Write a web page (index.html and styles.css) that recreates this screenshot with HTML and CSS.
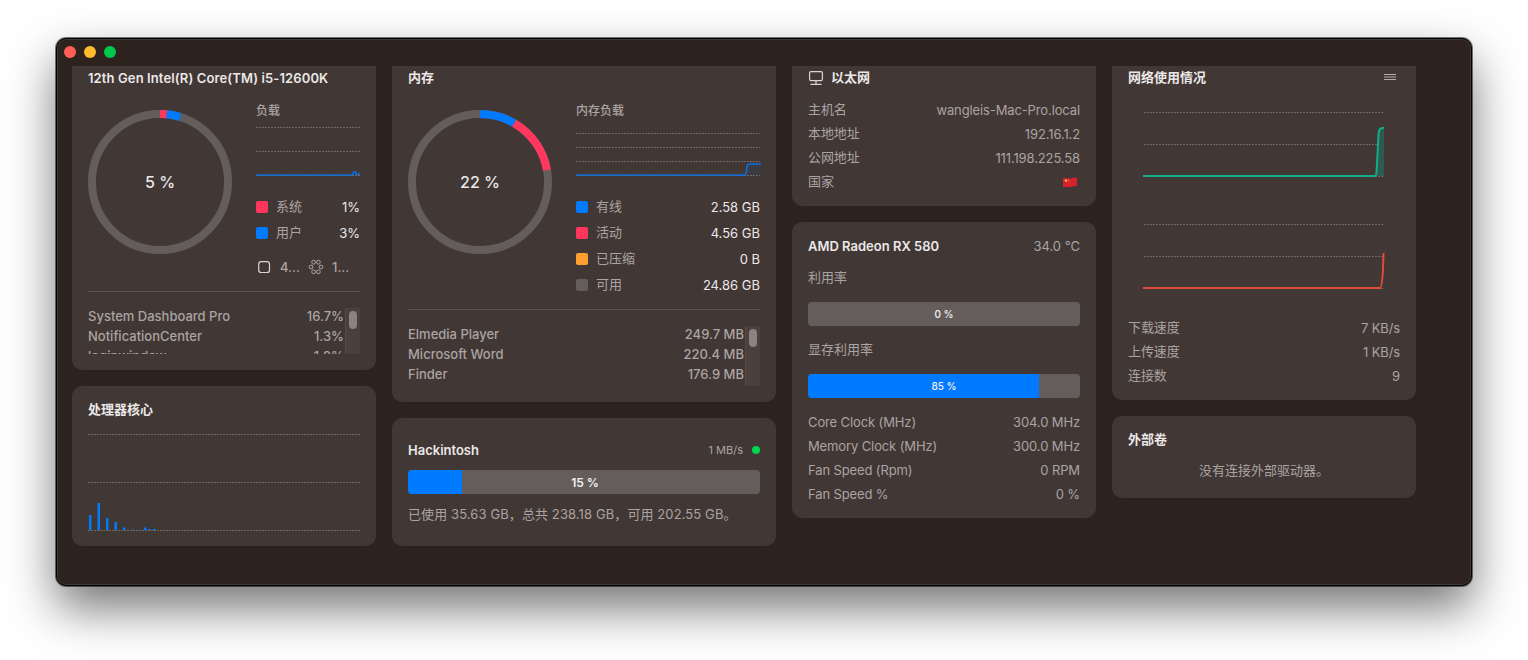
FILE: index.html
```html
<!DOCTYPE html>
<html lang="zh-CN">
<head>
  <meta charset="UTF-8">
  <title>System Dashboard Pro</title>
  <link rel="stylesheet" href="styles.css">
</head>
<body>
  <div class="window">
    <div class="titlebar">
      <span class="light red"></span>
      <span class="light yellow"></span>
      <span class="light green"></span>
    </div>

    <div class="board">
      <div class="columns">

        <!-- CPU column -->
        <div class="column">
          <section class="card">
            <h2 class="card-title latin">12th Gen Intel(R) Core(TM) i5-12600K</h2>
            <div class="summary">
              <div class="donut">
                <svg viewBox="0 0 144 144" width="144" height="144">
                  <circle class="ring-bg" cx="72" cy="72" r="68"/>
                  <circle class="ring pink" cx="72" cy="72" r="68" pathLength="100" stroke-dasharray="1.6 98.4" transform="rotate(-90 72 72)"/>
                  <circle class="ring blue" cx="72" cy="72" r="68" pathLength="100" stroke-dasharray="3.2 96.8" stroke-dashoffset="-1.6" transform="rotate(-90 72 72)"/>
                </svg>
                <span class="donut-label">5 %</span>
              </div>
              <div class="summary-side">
                <div class="sub-label">负载</div>
                <svg class="mini-chart" viewBox="0 0 104 66" width="104" height="66">
                  <line class="grid" x1="0" y1="9" x2="104" y2="9"/>
                  <line class="grid" x1="0" y1="33" x2="104" y2="33"/>
                  <line class="grid" x1="0" y1="57" x2="104" y2="57"/>
                  <path class="line-blue" d="M0 57 H96 C97.5 57 97 53.5 98.5 53.5 C100 53.5 100 56.5 101.5 56.5 C102.5 56.5 103 55.5 104 55.5"/>
                </svg>
                <div class="legend">
                  <div class="legend-row"><span class="swatch bg-pink"></span><span class="legend-name zh">系统</span><span class="legend-value">1%</span></div>
                  <div class="legend-row"><span class="swatch bg-blue"></span><span class="legend-name zh">用户</span><span class="legend-value">3%</span></div>
                </div>
                <div class="core-info">
                  <svg viewBox="0 0 16 16" width="16" height="16"><rect class="icon-stroke" x="2.7" y="2.7" width="10.8" height="10.8" rx="2.6"/></svg>
                  <span class="core-count">4...</span>
                  <svg viewBox="0 0 16 16" width="16" height="16">
                    <circle class="icon-thin" cx="5.6" cy="3.2" r="1.9"/><circle class="icon-thin" cx="10.4" cy="3.2" r="1.9"/>
                    <circle class="icon-thin" cx="13" cy="8" r="1.9"/><circle class="icon-thin" cx="10.4" cy="12.8" r="1.9"/>
                    <circle class="icon-thin" cx="5.6" cy="12.8" r="1.9"/><circle class="icon-thin" cx="3" cy="8" r="1.9"/>
                  </svg>
                  <span class="core-count">1...</span>
                </div>
              </div>
            </div>
            <hr class="divider cpu-divider">
            <div class="proc-list short">
              <div class="proc-rows">
                <div class="proc-row"><span>System Dashboard Pro</span><span>16.7%</span></div>
                <div class="proc-row"><span>NotificationCenter</span><span>1.3%</span></div>
                <div class="proc-row"><span>loginwindow</span><span>1.0%</span></div>
              </div>
              <div class="scrollbar"><div class="thumb"></div></div>
            </div>
          </section>

          <section class="card cores">
            <h2 class="card-title zh">处理器核心</h2>
            <svg class="cores-chart" viewBox="0 0 272 102" width="272" height="102">
              <line class="grid" x1="0" y1="4" x2="272" y2="4"/>
              <line class="grid" x1="0" y1="52" x2="272" y2="52"/>
              <line class="grid" x1="0" y1="100" x2="272" y2="100"/>
              <rect class="bar" x="1" y="85" width="2.5" height="15"/>
              <rect class="bar" x="9.5" y="73" width="2.5" height="27"/>
              <rect class="bar" x="18" y="88" width="2.5" height="12"/>
              <rect class="bar" x="26.5" y="92" width="2.5" height="8"/>
              <rect class="bar" x="35" y="97.5" width="2.5" height="2.5"/>
              <rect class="bar" x="43.5" y="99.5" width="2.5" height="0.5"/>
              <rect class="bar" x="56" y="97.5" width="2.5" height="2.5"/>
              <rect class="bar" x="60.5" y="99" width="2.5" height="1"/>
              <rect class="bar" x="65" y="99" width="2.5" height="1"/>
            </svg>
          </section>
        </div>

        <!-- Memory column -->
        <div class="column wide">
          <section class="card">
            <h2 class="card-title zh">内存</h2>
            <div class="summary">
              <div class="donut">
                <svg viewBox="0 0 144 144" width="144" height="144">
                  <circle class="ring-bg" cx="72" cy="72" r="68"/>
                  <circle class="ring blue" cx="72" cy="72" r="68" pathLength="100" stroke-dasharray="8.4 91.6" transform="rotate(-90 72 72)"/>
                  <circle class="ring pink" cx="72" cy="72" r="68" pathLength="100" stroke-dasharray="13.8 86.2" stroke-dashoffset="-8.4" transform="rotate(-90 72 72)"/>
                </svg>
                <span class="donut-label">22 %</span>
              </div>
              <div class="summary-side">
                <div class="sub-label">内存负载</div>
                <svg class="mini-chart" viewBox="0 0 184 66" width="184" height="66">
                  <line class="grid" x1="0" y1="15" x2="184" y2="15"/>
                  <line class="grid" x1="0" y1="29" x2="184" y2="29"/>
                  <line class="grid" x1="0" y1="43" x2="184" y2="43"/>
                  <line class="grid" x1="0" y1="57" x2="184" y2="57"/>
                  <path class="fill-blue" d="M170 57 L171 47 C171.5 46 172 46 173 46 H185 V57 Z"/>
                  <path class="line-blue" d="M0 57 H169 C170.5 57 170.5 52 171 49 C171.5 46 172 46 173.5 46 H185"/>
                </svg>
                <div class="legend">
                  <div class="legend-row"><span class="swatch bg-blue"></span><span class="legend-name zh">有线</span><span class="legend-value">2.58 GB</span></div>
                  <div class="legend-row"><span class="swatch bg-pink"></span><span class="legend-name zh">活动</span><span class="legend-value">4.56 GB</span></div>
                  <div class="legend-row"><span class="swatch bg-orange"></span><span class="legend-name zh">已压缩</span><span class="legend-value">0 B</span></div>
                  <div class="legend-row"><span class="swatch bg-grey"></span><span class="legend-name zh">可用</span><span class="legend-value">24.86 GB</span></div>
                </div>
              </div>
            </div>
            <hr class="divider mem-divider">
            <div class="proc-list">
              <div class="proc-rows">
                <div class="proc-row"><span>Elmedia Player</span><span>249.7 MB</span></div>
                <div class="proc-row"><span>Microsoft Word</span><span>220.4 MB</span></div>
                <div class="proc-row"><span>Finder</span><span>176.9 MB</span></div>
              </div>
              <div class="scrollbar"><div class="thumb"></div></div>
            </div>
          </section>

          <section class="card disk">
            <div class="card-head">
              <h2 class="card-title">Hackintosh</h2>
              <div class="disk-speed">1 MB/s <span class="dot"></span></div>
            </div>
            <div class="meter">
              <div class="meter-fill" style="width: 15.2%"></div>
              <span class="meter-text bold">15 %</span>
            </div>
            <p class="disk-note">已使用 35.63 GB，总共 238.18 GB，可用 202.55 GB。</p>
          </section>
        </div>

        <!-- Network and GPU column -->
        <div class="column">
          <section class="card compact">
            <h2 class="card-title with-icon">
              <svg viewBox="0 0 16 16" width="16" height="16">
                <rect class="icon-stroke" x="1.6" y="1.6" width="12.8" height="9" rx="1.4"/>
                <path class="icon-stroke" d="M8 10.6 V14.4 M2.4 14.4 H13.6"/>
              </svg>
              <span class="zh">以太网</span>
            </h2>
            <div class="kv-list">
              <div class="kv"><span class="zh">主机名</span><span>wangleis-Mac-Pro.local</span></div>
              <div class="kv"><span class="zh">本地地址</span><span>192.16.1.2</span></div>
              <div class="kv"><span class="zh">公网地址</span><span>111.198.225.58</span></div>
              <div class="kv">
                <span class="zh">国家</span>
                <svg class="flag" viewBox="0 0 14 11" width="14" height="11">
                  <path fill="#d8202c" d="M0 1.4 C3 0 5 2 8 1.2 C10 0.6 12 0.4 14 0.4 V9 C12 9 10 9.4 8 10 C5 10.8 3 8.8 0 10.2 Z"/>
                  <circle fill="#f4d13d" cx="3" cy="3.6" r="1.2"/>
                  <circle fill="#f4d13d" cx="5.4" cy="2.4" r="0.4"/>
                  <circle fill="#f4d13d" cx="6" cy="3.6" r="0.4"/>
                  <circle fill="#f4d13d" cx="5.4" cy="5" r="0.4"/>
                </svg>
              </div>
            </div>
          </section>

          <section class="card compact">
            <div class="card-head">
              <h2 class="card-title">AMD Radeon RX 580</h2>
              <span class="temp">34.0 °C</span>
            </div>
            <div class="gpu-label zh">利用率</div>
            <div class="meter">
              <span class="meter-text">0 %</span>
            </div>
            <div class="gpu-label zh">显存利用率</div>
            <div class="meter">
              <div class="meter-fill" style="width: 85%"></div>
              <span class="meter-text">85 %</span>
            </div>
            <div class="kv-list">
              <div class="kv"><span>Core Clock (MHz)</span><span>304.0 MHz</span></div>
              <div class="kv"><span>Memory Clock (MHz)</span><span>300.0 MHz</span></div>
              <div class="kv"><span>Fan Speed (Rpm)</span><span>0 RPM</span></div>
              <div class="kv"><span>Fan Speed %</span><span>0 %</span></div>
            </div>
          </section>
        </div>

        <!-- Traffic column -->
        <div class="column">
          <section class="card compact">
            <div class="card-head">
              <h2 class="card-title zh">网络使用情况</h2>
              <svg class="menu-icon" viewBox="0 0 12 6" width="12" height="6">
                <path d="M0 .5 H12 M0 3 H12 M0 5.5 H12"/>
              </svg>
            </div>
            <div class="net-charts">
              <svg viewBox="0 0 272 100" width="272" height="100">
                <line class="grid" x1="16" y1="16" x2="255" y2="16"/>
                <line class="grid" x1="16" y1="48" x2="255" y2="48"/>
                <line class="grid" x1="16" y1="80" x2="255" y2="80"/>
                <path class="fill-green" d="M249 80 L250.5 38 C251 33 252 32 254 32 H256 V80 Z"/>
                <path class="line-green" d="M15 80 H247 C248.5 80 248.5 76 249 68 L250.5 38 C251 33 252 32 254 32 H256"/>
              </svg>
              <svg viewBox="0 0 272 100" width="272" height="100">
                <line class="grid" x1="16" y1="16" x2="255" y2="16"/>
                <line class="grid" x1="16" y1="48" x2="255" y2="48"/>
                <line class="grid" x1="16" y1="80" x2="255" y2="80"/>
                <path class="line-red" d="M15 80 H252 C253.5 80 254.5 70 255 62 L255.5 45"/>
              </svg>
            </div>
            <div class="kv-list">
              <div class="kv"><span class="zh">下载速度</span><span>7 KB/s</span></div>
              <div class="kv"><span class="zh">上传速度</span><span>1 KB/s</span></div>
              <div class="kv"><span class="zh">连接数</span><span>9</span></div>
            </div>
          </section>

          <section class="card">
            <h2 class="card-title zh">外部卷</h2>
            <p class="empty-note">没有连接外部驱动器。</p>
          </section>
        </div>

      </div>
    </div>
  </div>
</body>
</html>
```

FILE: styles.css
```css
/* Global settings */
* { box-sizing: border-box; }
html, body { height: 100%; }
body {
  margin: 0;
  padding: 38px 56px;
  background: #fff;
  overflow: hidden;
  font-family: Inter, "Noto Sans CJK SC", "Liberation Sans", sans-serif;
  font-size: 13px;
  line-height: 16px;
  color: #aaa4a2;
}

/* Window */
.window {
  width: 1416px;
  height: 548px;
  background: #2d221e;
  border-radius: 10px;
  overflow: hidden;
  box-shadow: 0 22px 48px rgba(0, 0, 0, 0.55), 0 0 0 1px rgba(0, 0, 0, 0.5);
  position: relative;
}
.window:after {
  content: "";
  position: absolute;
  inset: 0;
  border: 1px solid #000;
  border-radius: 10px;
  box-shadow: inset 0 0 0 1px rgba(255, 255, 255, 0.1);
  pointer-events: none;
}
.titlebar {
  height: 28px;
  display: flex;
  align-items: center;
  gap: 8px;
  padding-left: 8px;
}
.light {
  width: 12px;
  height: 12px;
  border-radius: 50%;
}
.light.red { background: #ff5f57; }
.light.yellow { background: #febc2e; }
.light.green { background: #00c84a; }

/* Board is scrolled a bit, so the first row of cards is cut by the titlebar */
.board {
  height: 520px;
  overflow: hidden;
}
.columns {
  display: flex;
  align-items: flex-start;
  gap: 16px;
  padding-left: 16px;
  margin-top: -12px;
}
.column {
  width: 304px;
  display: flex;
  flex-direction: column;
  gap: 16px;
}
.column.wide { width: 384px; }

/* Cards */
.card {
  background: #413735;
  border-radius: 10px;
  padding: 16px;
}
.card.compact { padding-bottom: 12px; }
.card.cores { padding-bottom: 14px; }
.card.disk { padding: 24px 16px 22px; }
.card-title {
  margin: 0;
  font-size: 13px;
  line-height: 16px;
  font-weight: 600;
  color: #ebe8e7;
}
.card-title.latin { letter-spacing: 0.11px; }
.card-title.with-icon {
  display: flex;
  align-items: center;
  gap: 7px;
}
.card-head {
  display: flex;
  align-items: center;
  justify-content: space-between;
}

/* Noto CJK sits about a pixel lower than the Latin text next to it */
.zh { transform: translateY(-1px); }

/* Donut summary */
.summary {
  display: flex;
  gap: 24px;
  margin-top: 16px;
}
.summary-side { flex: 1; }
.donut {
  width: 144px;
  height: 144px;
  margin-top: 8px;
  position: relative;
  flex: none;
}
.donut svg { display: block; }
.donut-label {
  position: absolute;
  inset: 0;
  display: flex;
  align-items: center;
  justify-content: center;
  font-size: 16px;
  font-weight: 500;
  color: #ebe8e7;
}
.ring-bg, .ring {
  fill: none;
  stroke-width: 8;
}
.ring-bg { stroke: #635d5c; }
.ring.pink { stroke: #ff375f; }
.ring.blue { stroke: #007aff; }

.sub-label {
  height: 16px;
  padding-top: 1px;
  font-size: 12px;
  font-weight: 500;
  color: #aaa4a2;
}
.mini-chart {
  display: block;
  overflow: visible;
}
.grid {
  stroke: #6f6866;
  stroke-width: 1;
  stroke-dasharray: 2 1;
  shape-rendering: crispEdges;
}
.line-blue {
  fill: none;
  stroke: #0a70e0;
  stroke-width: 1.7;
}
.fill-blue { fill: #3a3b43; }
.line-green {
  fill: none;
  stroke: #0fae8b;
  stroke-width: 2;
}
.fill-green { fill: #2f5a50; }
.line-red {
  fill: none;
  stroke: #df4a41;
  stroke-width: 2;
}

.legend { margin-top: 10px; }
.legend-row {
  height: 26px;
  display: flex;
  align-items: center;
}
.swatch {
  width: 12px;
  height: 12px;
  border-radius: 2px;
  margin-right: 8px;
  flex: none;
}
.bg-pink { background: #ff375f; }
.bg-blue { background: #007aff; }
.bg-orange { background: #ff9f2f; }
.bg-grey { background: #635d5c; }
.legend-name { flex: 1; }
.legend-value { color: #ebe8e7; }

.core-info {
  display: flex;
  align-items: center;
  margin-top: 13px;
  height: 16px;
}
.core-info svg { flex: none; }
.core-count {
  font-weight: 500;
  margin: 0 12px 0 8px;
  width: 16px;
  white-space: nowrap;
}
.icon-stroke {
  fill: none;
  stroke: #d8d5d4;
  stroke-width: 1.2;
}
.icon-thin {
  fill: none;
  stroke: #b5afad;
  stroke-width: 0.9;
}

.divider {
  border: 0;
  height: 1px;
  background: #5a5150;
  margin: 0 0 16px;
}
.cpu-divider { margin-top: 16px; }
.mem-divider { margin-top: 11px; }

/* Process lists */
.proc-list {
  display: flex;
  height: 60px;
}
.proc-list.short { height: 46px; }
.proc-rows {
  flex: 1;
  overflow: hidden;
}
.proc-row {
  height: 20px;
  line-height: 20px;
  display: flex;
  justify-content: space-between;
  font-weight: 500;
}
.proc-row:first-child { margin-top: -2px; }
.scrollbar {
  width: 15px;
  margin-left: 1px;
  padding: 3px 3px 0;
  background: #4a403e;
  border-left: 1px solid #544a48;
}
.thumb {
  width: 8px;
  height: 18px;
  border-radius: 4px;
  background: #8a8381;
}

.cores-chart {
  display: block;
  margin-top: 12px;
}
.bar { fill: #007aff; }

/* Disk */
.disk-speed {
  display: flex;
  align-items: center;
  gap: 9px;
  font-size: 11px;
}
.dot {
  width: 8px;
  height: 8px;
  border-radius: 50%;
  background: #00d350;
}
.meter {
  height: 24px;
  margin-top: 12px;
  background: #635d5c;
  border-radius: 4px;
  overflow: hidden;
  position: relative;
}
.meter-fill {
  height: 100%;
  background: #007aff;
}
.meter-text {
  position: absolute;
  inset: 0;
  display: flex;
  align-items: center;
  justify-content: center;
  font-size: 10px;
  font-weight: 500;
  color: #f4f2f1;
}
.meter-text.bold {
  padding: 1px 0 0 2px;
  font-size: 12px;
  font-weight: 600;
}
.disk-note {
  margin: 10px 0 0;
  line-height: 20px;
  letter-spacing: 0.1px;
}

/* Key value rows */
.kv-list {
  margin-top: 12px;
  letter-spacing: -0.12px;
}
.kv {
  height: 24px;
  display: flex;
  align-items: center;
  justify-content: space-between;
}
.flag { margin-right: 3px; }
.temp { color: #aaa4a2; }
.gpu-label {
  height: 24px;
  line-height: 24px;
  margin-top: 12px;
}
.menu-icon {
  margin-right: 4px;
  transform: translateY(-1px);
}
.menu-icon path {
  fill: none;
  stroke: #b5afad;
  stroke-width: 1;
}
.net-charts {
  display: flex;
  flex-direction: column;
  gap: 12px;
  margin-top: 10px;
}
.net-charts svg { display: block; }
.net-charts + .kv-list { margin-top: 8px; }
.empty-note {
  margin: 10px 0 0;
  line-height: 24px;
  text-align: center;
}
```
